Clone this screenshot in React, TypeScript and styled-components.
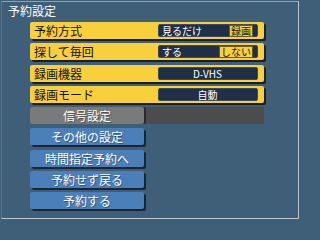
import React from 'react';
import styled, { createGlobalStyle } from 'styled-components';

const GlobalStyle = createGlobalStyle`
  html, body {
    margin: 0;
    padding: 0;
    background: #3f5e78;
  }
  body {
    font-family: "Noto Sans CJK JP", "Noto Sans", sans-serif;
  }
`;

interface settingI {
  label: string
  value: string
  flag?: string
  center?: boolean
}

const settings: settingI[] = [
  { label: '予約方式', value: '見るだけ', flag: '録画' },
  { label: '探して毎回', value: 'する', flag: 'しない' },
  { label: '録画機器', value: 'D-VHS', center: true },
  { label: '録画モード', value: '自動', center: true },
];

const actions = ['その他の設定', '時間指定予約へ', '予約せず戻る', '予約する'];

const App = () => {
  return (
    <Screen>
      <GlobalStyle />
      <Frame>
        <Title>予約設定</Title>
        <Menu>
          {settings.map((s) => (
            <SettingRow key={s.label}>
              <RowLabel>{s.label}</RowLabel>
              <ValueBox $center={s.center}>
                <span>{s.value}</span>
                {s.flag && <Flag>{s.flag}</Flag>}
              </ValueBox>
            </SettingRow>
          ))}
          <DisabledRow>
            <GrayButton>信号設定</GrayButton>
          </DisabledRow>
          {actions.map((a) => (
            <BlueButton key={a}>{a}</BlueButton>
          ))}
        </Menu>
      </Frame>
    </Screen>
  );
};

export default App;

const Screen = styled.div`
  width: 300px;
  height: 220px;
  padding: 1px;
  box-sizing: border-box;
  background: #3f5e78;
`;

const Frame = styled.div`
  width: 100%;
  height: 100%;
  box-sizing: border-box;
  border: 1px solid #b9c4cd;
  border-left-color: #5c7890;
  border-top-color: #8ea2b2;
  position: relative;
`;

const Title = styled.div`
  color: #ffffff;
  font-size: 12px;
  line-height: 14px;
  padding: 2px 0 0 6px;
  height: 18px;
  box-sizing: border-box;
`;

const Menu = styled.div`
  display: flex;
  flex-direction: column;
  gap: 4.3px;
  padding-left: 28px;
  padding-top: 2px;
`;

const SettingRow = styled.div`
  width: 234px;
  height: 17px;
  box-sizing: border-box;
  background: #f7d03c;
  border-radius: 2px;
  box-shadow: 2px 2px 0 #1a1f24;
  display: flex;
  align-items: center;
  padding-left: 4px;
`;

const RowLabel = styled.div`
  width: 124px;
  color: #111111;
  font-size: 12px;
  line-height: 17px;
  white-space: nowrap;
`;

const ValueBox = styled.div<{ $center?: boolean }>`
  width: 100px;
  height: 13px;
  box-sizing: border-box;
  background: #1f2f47;
  border: 1px solid #3a4a5e;
  border-radius: 2px;
  display: flex;
  align-items: center;
  justify-content: ${(p) => (p.$center ? 'center' : 'space-between')};
  padding: 0 4px 0 3px;
  color: #ffffff;
  font-size: 10px;
  line-height: 11px;
  white-space: nowrap;
`;

const Flag = styled.span`
  background: #f7d03c;
  color: #1a1a1a;
  font-size: 10px;
  line-height: 10px;
  padding: 0 1px;
  border: 1px solid #6a5a20;
`;

const DisabledRow = styled.div`
  width: 234px;
  height: 17px;
  background: #4c4c4c;
  display: flex;
`;

const buttonBase = `
  width: 114px;
  height: 17px;
  box-sizing: border-box;
  border-radius: 2px;
  box-shadow: 2px 2px 0 #1c2530;
  color: #ffffff;
  font-size: 12px;
  line-height: 17px;
  text-align: center;
  white-space: nowrap;
  text-shadow: 1px 1px 0 rgba(0, 0, 0, 0.35);
`;

const GrayButton = styled.div`
  ${buttonBase}
  background: #7a7a78;
  box-shadow: 2px 0 0 #2a2a2a;
`;

const BlueButton = styled.div`
  ${buttonBase}
  background: #4b7fba;
`;
